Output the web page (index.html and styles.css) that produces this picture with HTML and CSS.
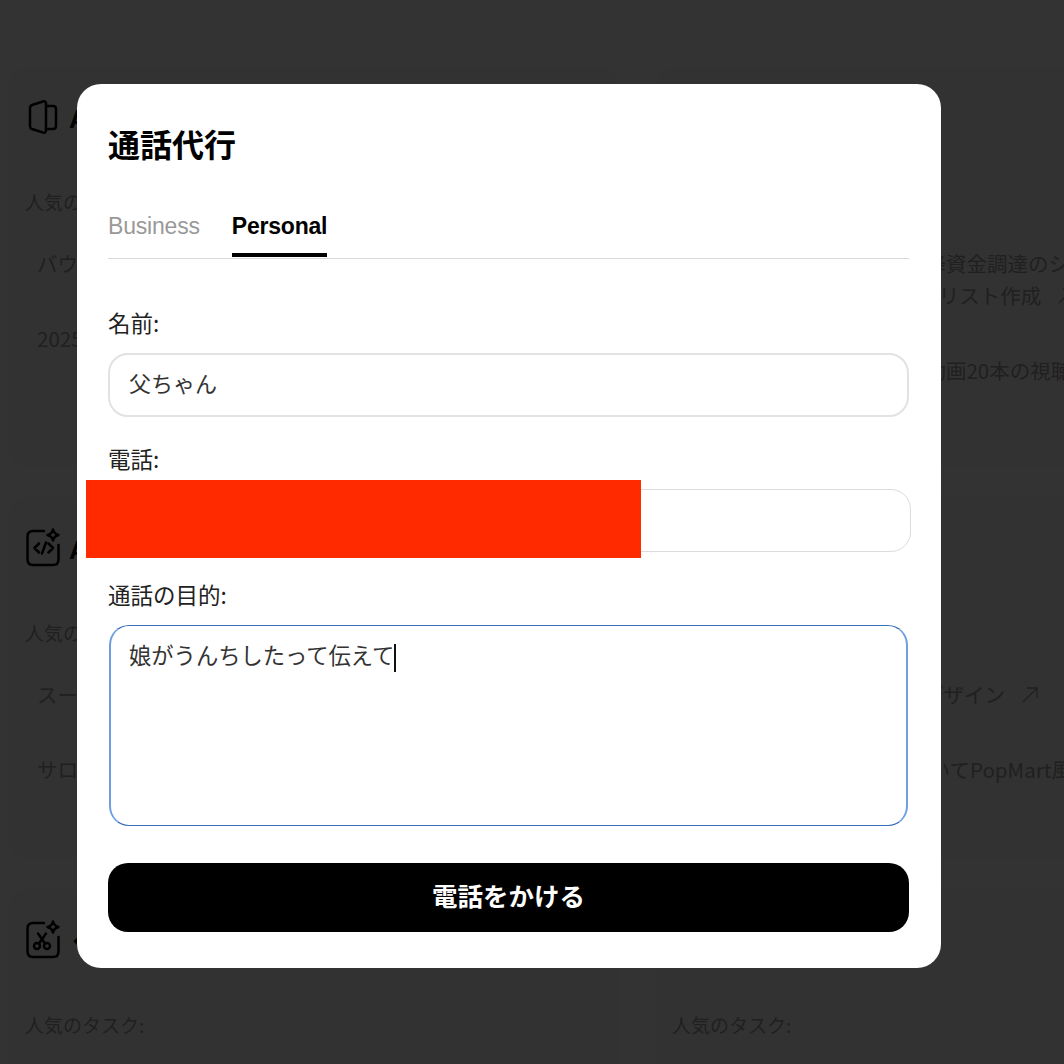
FILE: index.html
```html
<!DOCTYPE html>
<html lang="ja">
<head>
    <meta charset="UTF-8">
    <meta name="viewport" content="width=device-width, initial-scale=1.0">
    <title>通話代行</title>
    <link rel="stylesheet" href="styles.css">
</head>
<body>
    <div class="page">
        <section class="card card-first">
            <div class="card-head">
                <svg class="card-icon" viewBox="0 0 40 40"><path d="M5 11c0-1.500.8-2.500 2-3l11-3.500c2-.5 3 .5 3 2v27c0 1.500-1 2.500-3 2L7 32c-1.200-.5-2-1.500-2-3z"/><path d="M21 9h7c2 0 3 1 3 3v17c0 2-1 3-3 3h-7"/></svg>
                <span class="card-title">AIスライド</span>
            </div>
            <p class="task-label">人気のタスク:</p>
            <div class="chips">
                <span class="chip">バウンド</span>
                <span class="chip">2025年</span>
            </div>
        </section>
        <section class="card card-first">
            <div class="card-head">
                <span class="card-title">AIリサーチ</span>
            </div>
            <p class="task-label">人気のタスク:</p>
            <div class="chips">
                <span class="chip">新興企業向け シリーズA以降資金調達のシミュレーション<br>資金調達計画とVC 向けアプリスト作成<svg class="chip-arrow" viewBox="0 0 16 16"><path d="M1 15L15 1M5 1h10v10"/></svg></span>
                <span class="chip">競合企業3社分の 最新人気動画20本の視聴</span>
            </div>
        </section>
        <section class="card">
            <div class="card-head">
                <svg class="card-icon" viewBox="0 0 40 40"><path d="M19 3H8C4.500 3 2.500 5 2.500 8.500v23C2.500 35 4.500 37 8 37h20c3.500 0 5.500-2 5.500-5.500V17"/><path d="M28 1.500c.8 3.200 2.300 4.700 5.500 5.500-3.200.8-4.700 2.300-5.500 5.500-.8-3.200-2.300-4.700-5.500-5.500 3.200-.8 4.700-2.300 5.500-5.500z"/><path d="M14 15.500L9.500 20l4.500 4.500M23.500 15.500L28 20l-4.500 4.500M21 14.500l-4 11"/></svg>
                <span class="card-title">AI開発</span>
            </div>
            <p class="task-label">人気のタスク:</p>
            <div class="chips">
                <span class="chip">スーパー</span>
                <span class="chip">サロン</span>
            </div>
        </section>
        <section class="card">
            <div class="card-head">
                <span class="card-title">AIデザイン</span>
            </div>
            <p class="task-label">人気のタスク:</p>
            <div class="chips">
                <span class="chip">ブランドロゴ&amp;パッケージデザイン<svg class="chip-arrow" viewBox="0 0 16 16"><path d="M1 15L15 1M5 1h10v10"/></svg></span>
                <span class="chip">自分の写真とイラストを用いてPopMart風のフィギュア</span>
            </div>
        </section>
        <section class="card">
            <div class="card-head">
                <svg class="card-icon" viewBox="0 0 40 40"><path d="M19 3H8C4.500 3 2.500 5 2.500 8.500v23C2.500 35 4.500 37 8 37h20c3.500 0 5.500-2 5.500-5.500V17"/><path d="M28 1.500c.8 3.200 2.300 4.700 5.500 5.500-3.200.8-4.700 2.300-5.500 5.500-.8-3.200-2.300-4.700-5.500-5.500 3.200-.8 4.700-2.300 5.500-5.500z"/><circle cx="12" cy="26" r="3"/><circle cx="22" cy="26" r="3"/><path d="M14 23.500l7-10M20 23.500l-7-10"/></svg>
                <span class="card-title card-title-mark">◆編集</span>
            </div>
            <p class="task-label">人気のタスク:</p>
        </section>
        <section class="card">
            <div class="card-head">
                <span class="card-title">AI動画</span>
            </div>
            <p class="task-label">人気のタスク:</p>
        </section>
    </div>

    <div class="overlay">
        <div class="modal">
            <h1>通話代行</h1>
            <div class="tabs">
                <span class="tab">Business</span>
                <span class="tab tab-active">Personal</span>
            </div>
            <form class="call-form">
                <label class="field">
                    <span class="field-label">名前:</span>
                    <input class="text-input" type="text" value="父ちゃん">
                </label>
                <label class="field">
                    <span class="field-label">電話:</span>
                    <span class="phone-wrap">
                        <input class="text-input phone-input" type="text">
                        <span class="redaction"></span>
                    </span>
                </label>
                <label class="field">
                    <span class="field-label">通話の目的:</span>
                    <span class="purpose-box">娘がうんちしたって伝えて<span class="caret"></span></span>
                </label>
                <button class="call-button" type="button">電話をかける</button>
            </form>
        </div>
    </div>
</body>
</html>
```

FILE: styles.css
```css
* {
    box-sizing: border-box;
}
html, body {
    height: 100%;
}
body {
    margin: 0;
    overflow: hidden;
    background-color: #ffffff;
    font-family: "Noto Sans CJK JP", "Noto Sans", sans-serif;
    color: #111;
}
.page {
    display: grid;
    grid-template-columns: 612px 612px;
    grid-auto-rows: min-content;
    column-gap: 35px;
    row-gap: 30px;
    width: 1300px;
    padding: 66px 0 0 8px;
}
.card {
    height: 362px;
    padding: 0 17px;
    background-color: #fbfbfb;
    border-radius: 20px;
}
.card-first {
    height: 401px;
}
.card-head {
    display: flex;
    align-items: center;
    gap: 4px;
    height: 102px;
    border-bottom: 1px solid #f5f5f5;
}
.card-icon {
    width: 40px;
    height: 40px;
    fill: none;
    stroke: #000;
    stroke-width: 2.5;
    stroke-linecap: round;
    stroke-linejoin: round;
}
.card-title {
    font-size: 26px;
    font-weight: 700;
    font-family: "Liberation Sans", "Noto Sans CJK JP", sans-serif;
}
.card-title-mark {
    margin-left: 4px;
}
.task-label {
    margin: 20px 0 16px;
    font-size: 19px;
    line-height: 28px;
    color: #a0a0a0;
}
.chips {
    display: flex;
    flex-direction: column;
    align-items: flex-start;
    gap: 13px;
}
.chip {
    padding: 15px 13px 15px 12px;
    font-size: 20.5px;
    line-height: 32px;
    white-space: nowrap;
    color: #a0a0a0;
    background-color: #f7f7f7;
    border-radius: 14px;
}
.chip-arrow {
    width: 16px;
    height: 16px;
    margin-left: 17px;
    fill: none;
    stroke: #a0a0a0;
    stroke-width: 1.3;
}
.overlay {
    position: fixed;
    top: 0;
    left: 0;
    right: 0;
    bottom: 0;
    padding: 84px 0 0 77px;
    background-color: rgba(0, 0, 0, 0.8);
}
.modal {
    width: 864px;
    height: 884px;
    padding: 36px 32px 36px 31px;
    background-color: #ffffff;
    border-radius: 24px;
}
h1 {
    margin: 0;
    font-size: 32px;
    line-height: 46px;
    font-weight: 700;
    color: #000;
}
.tabs {
    display: flex;
    gap: 32px;
    height: 81px;
    margin-top: 12px;
    padding-top: 32px;
    border-bottom: 1px solid #d9d9d9;
    font-family: "Liberation Sans", Arial, sans-serif;
    font-size: 23px;
    letter-spacing: -0.2px;
}
.tab {
    height: 47px;
    line-height: 32px;
    color: #999;
}
.tab-active {
    font-weight: 700;
    color: #000;
    border-bottom: 4px solid #000;
}
.call-form {
    display: flex;
    flex-direction: column;
    padding-top: 47px;
}
.field {
    display: flex;
    flex-direction: column;
    gap: 15px;
    margin-bottom: 25px;
}
.field-label {
    font-size: 22.5px;
    line-height: 32px;
    color: #222;
}
.text-input {
    width: 100%;
    height: 64px;
    padding: 0 19px 6px;
    font-family: "Noto Sans CJK JP", sans-serif;
    font-size: 22px;
    color: #333;
    background-color: #fff;
    border: 2px solid #e2e2e2;
    border-radius: 20px;
    outline: none;
}
.phone-wrap {
    position: relative;
    display: block;
    width: 803px;
    margin-bottom: 1px;
}
.phone-input {
    display: block;
    height: 63px;
    border: 1px solid #dcdcdc;
}
.redaction {
    position: absolute;
    top: -9px;
    left: -22px;
    width: 555px;
    height: 78px;
    background-color: #ff2a00;
}
.purpose-box {
    display: block;
    height: 201px;
    margin: 0 1px;
    padding: 10px 18px;
    font-size: 22.3px;
    line-height: 36px;
    color: #333;
    border: 1px solid #3b6fb8;
    border-left: 2px solid #6f9fe0;
    border-right: 2px solid #6f9fe0;
    border-radius: 20px;
}
.caret {
    display: inline-block;
    width: 2px;
    height: 28px;
    vertical-align: middle;
    background-color: #111;
}
.call-button {
    height: 69px;
    margin-top: 12px;
    padding-bottom: 7px;
    font-family: "Noto Sans CJK JP", sans-serif;
    font-size: 25.5px;
    font-weight: 700;
    color: #fff;
    background-color: #000;
    border: none;
    border-radius: 20px;
}
```
